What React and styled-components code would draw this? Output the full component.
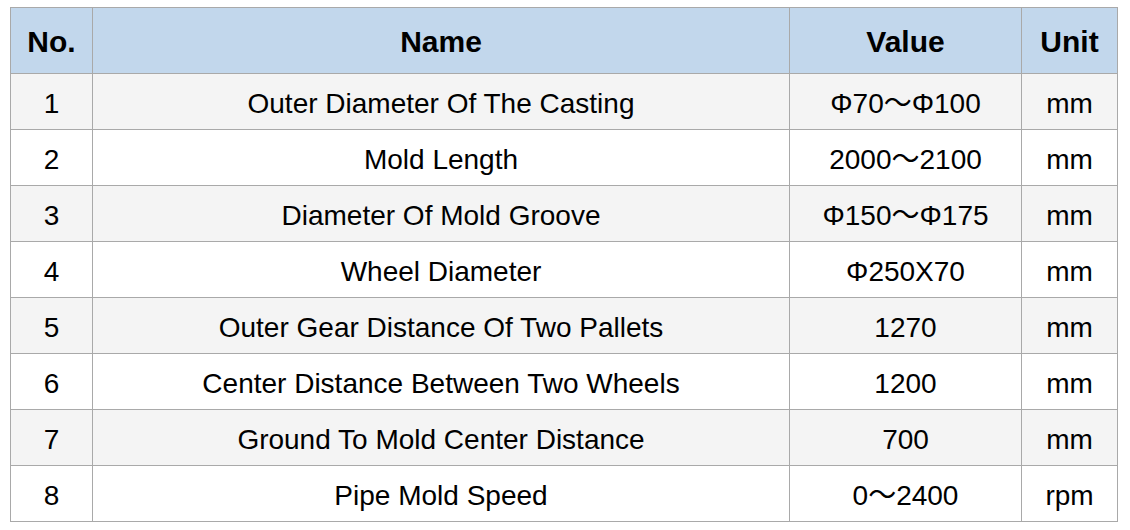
import React from 'react';
import styled, { createGlobalStyle } from 'styled-components';

const GlobalStyle = createGlobalStyle`
  html, body {
    margin: 0;
    padding: 0;
    background: #ffffff;
  }
  body {
    font-family: "Liberation Sans", Arial, "Noto Sans CJK SC", sans-serif;
  }
`;

const Page = styled.div`
  padding: 7px 13px 0 10px;
`;

const Table = styled.table`
  width: 1108px;
  border-collapse: collapse;
  table-layout: fixed;
  color: #000;
  font-size: 28px;
`;

const HeadRow = styled.tr`
  height: 66px;
  background: #c2d7ec;
`;

const HeadCell = styled.th`
  padding: 2px 0 0;
  border: 1px solid #a9a9a9;
  font-size: 30px;
  line-height: 30px;
  font-weight: bold;
  text-align: center;
  vertical-align: middle;
`;

const Row = styled.tr`
  height: 56px;
  background: ${p => (p.$shaded ? '#f4f4f4' : '#ffffff')};
`;

const Cell = styled.td`
  padding: 4px 0 0;
  border: 1px solid #a9a9a9;
  line-height: 30px;
  text-align: center;
  vertical-align: middle;
  white-space: nowrap;
`;

const rows = [
  ['Outer Diameter Of The Casting', 'Φ70～Φ100', 'mm'],
  ['Mold Length', '2000～2100', 'mm'],
  ['Diameter Of Mold Groove', 'Φ150～Φ175', 'mm'],
  ['Wheel Diameter', 'Φ250X70', 'mm'],
  ['Outer Gear Distance Of Two Pallets', '1270', 'mm'],
  ['Center Distance Between Two Wheels', '1200', 'mm'],
  ['Ground To Mold Center Distance', '700', 'mm'],
  ['Pipe Mold Speed', '0～2400', 'rpm'],
];

export default function App() {
  return (
    <Page>
      <GlobalStyle />
      <Table>
        <colgroup>
          <col style={{ width: 82 }} />
          <col style={{ width: 697 }} />
          <col style={{ width: 232 }} />
          <col style={{ width: 96 }} />
        </colgroup>
        <thead>
          <HeadRow>
            <HeadCell>No.</HeadCell>
            <HeadCell>Name</HeadCell>
            <HeadCell>Value</HeadCell>
            <HeadCell>Unit</HeadCell>
          </HeadRow>
        </thead>
        <tbody>
          {rows.map(([name, value, unit], i) => (
            <Row key={name} $shaded={i % 2 === 0}>
              <Cell>{i + 1}</Cell>
              <Cell>{name}</Cell>
              <Cell>{value}</Cell>
              <Cell>{unit}</Cell>
            </Row>
          ))}
        </tbody>
      </Table>
    </Page>
  );
}
